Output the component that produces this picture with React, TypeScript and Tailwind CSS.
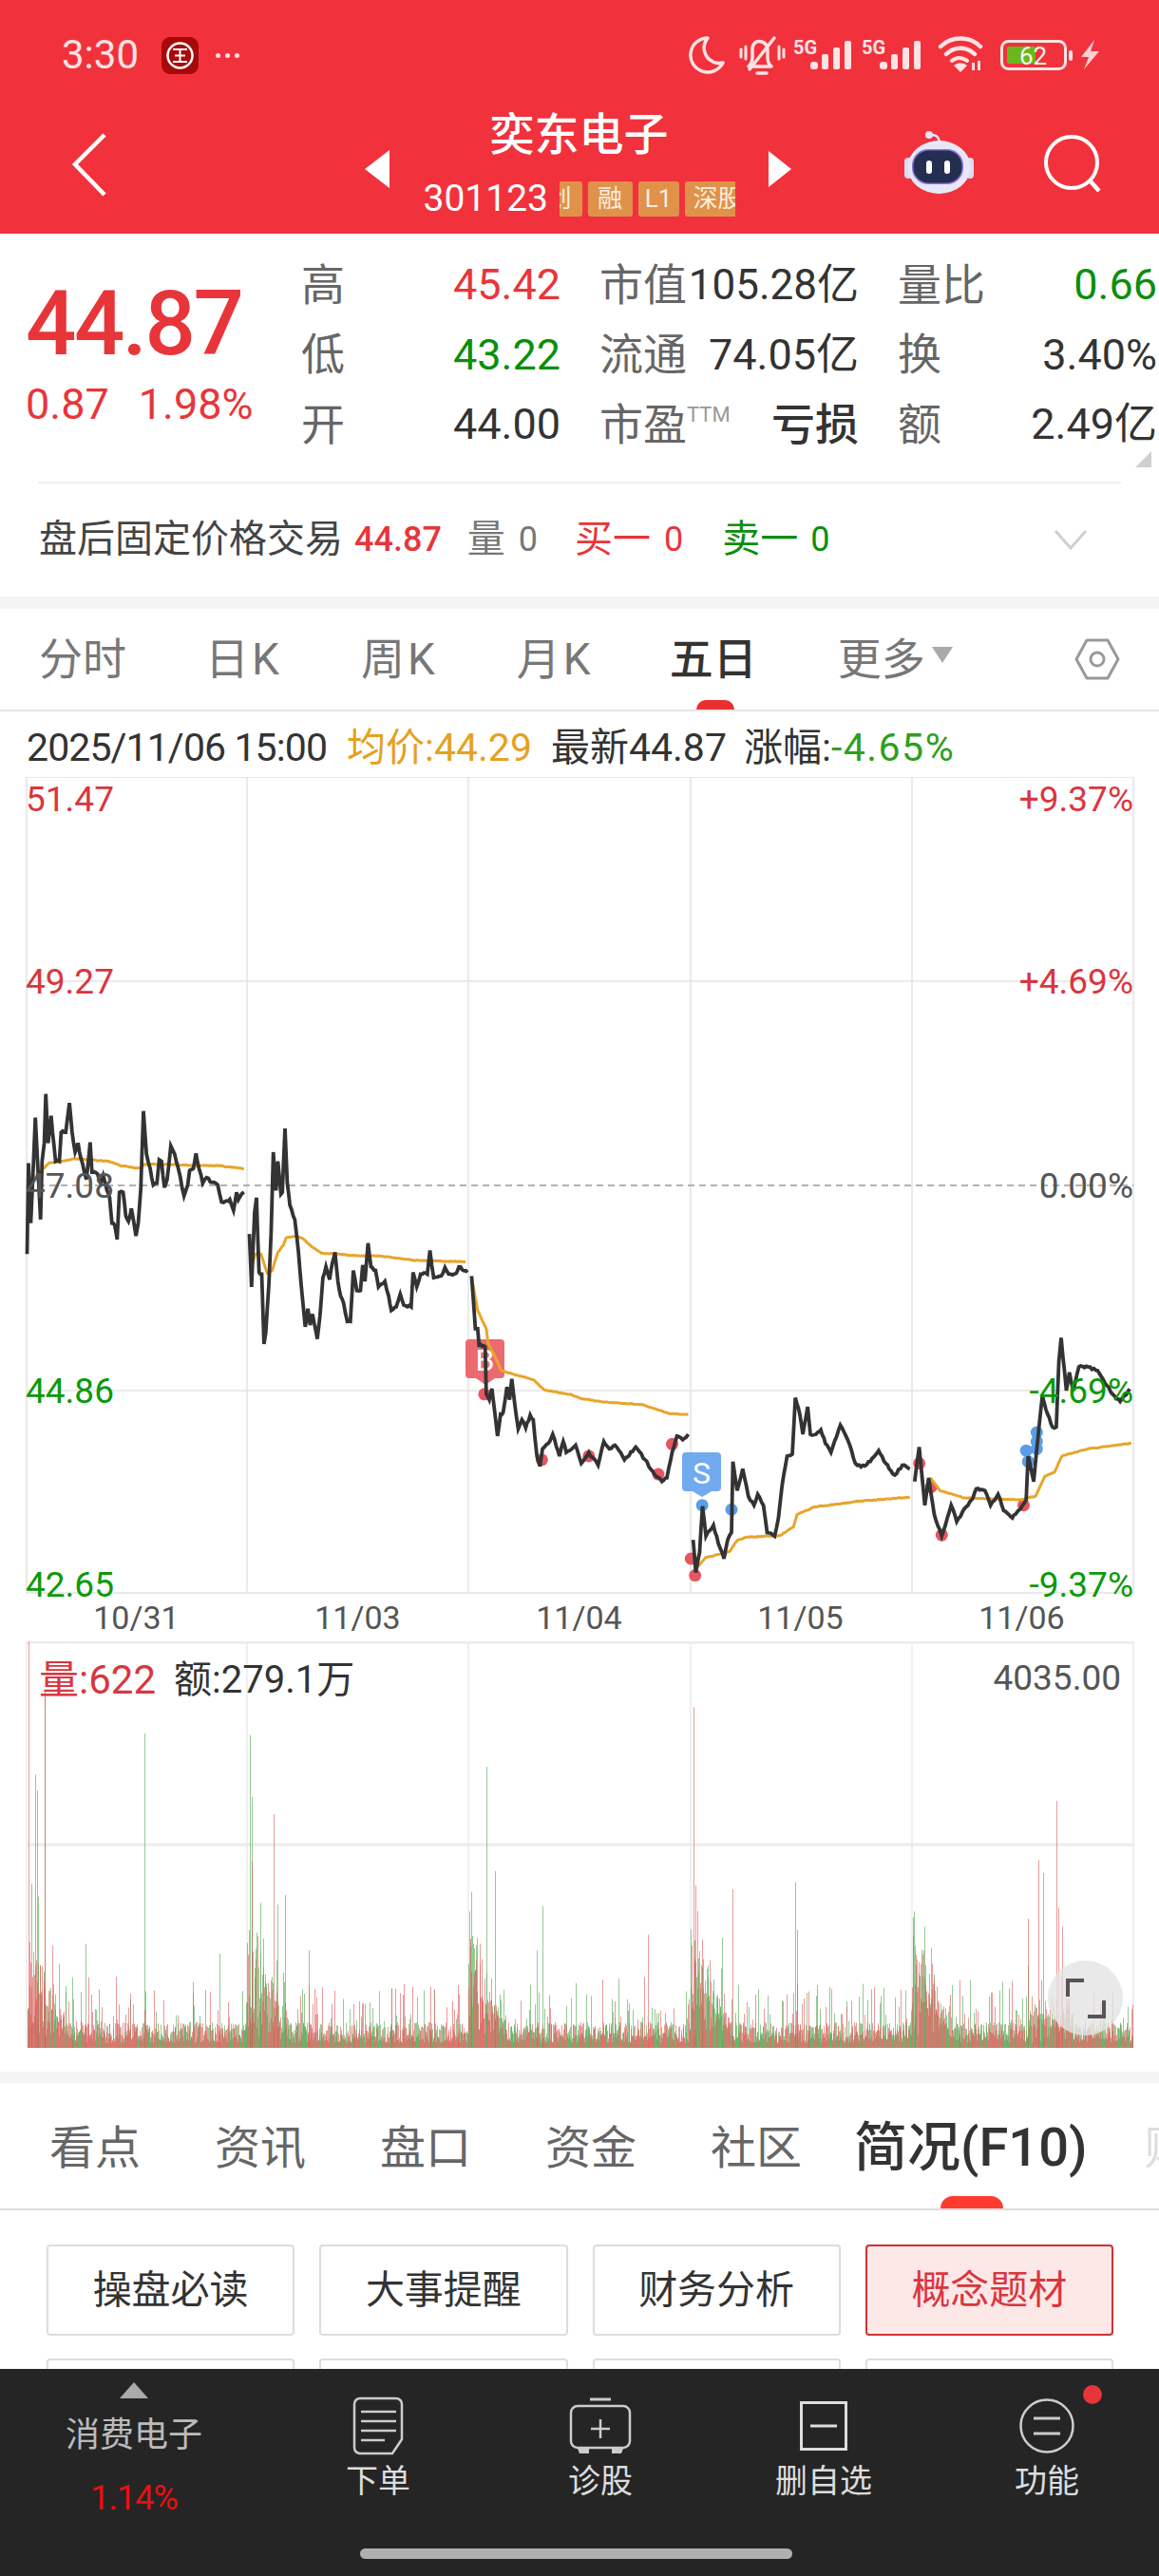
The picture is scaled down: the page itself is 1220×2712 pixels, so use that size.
import React from 'react'

type Pt = [number, number]

// seeded noise so the picture is the same on every load
function makeRand(seed: number) {
  let s = seed
  return () => {
    s = (s * 1664525 + 1013904223) % 4294967296
    return s / 4294967296
  }
}

const z3 = (p: Pt): Pt => [p[0] / 2.53, 1100 + p[1] / 2.61]
const z4 = (p: Pt): Pt => [600 + p[0] / 2.53, 1100 + p[1] / 2.61]

function jagged(points: Pt[], seed: number, amp = 1.1): string {
  const rand = makeRand(seed)
  const out: string[] = []
  for (let i = 0; i < points.length - 1; i++) {
    const [x0, y0] = points[i]
    const [x1, y1] = points[i + 1]
    const n = Math.max(1, Math.round((x1 - x0) / 1.8))
    for (let k = 0; k < n; k++) {
      const t = k / n
      const j = k === 0 ? 0 : (rand() - 0.5) * 2 * amp
      out.push(`${(x0 + (x1 - x0) * t).toFixed(1)},${(y0 + (y1 - y0) * t + j).toFixed(1)}`)
    }
  }
  const last = points[points.length - 1]
  out.push(`${last[0].toFixed(1)},${last[1].toFixed(1)}`)
  return out.join(' ')
}

const BLACK_1: Pt[] = ([[72,575],[76,325],[82,490],[88,350],[94,200],[100,320],[108,480],[112,320],[118,270],[122,135],[128,270],[136,195],[140,240],[148,320],[158,320],[163,240],[175,240],[185,160],[192,240],[200,295],[208,270],[215,310],[230,370],[240,268],[245,350],[260,355],[268,380],[275,360],[285,400],[292,420],[298,490],[305,495],[312,535],[318,405],[328,405],[335,470],[342,485],[350,450],[356,485],[362,525],[368,490],[375,395],[382,182],[390,300],[400,340],[408,385],[418,380],[424,316],[430,320],[438,392],[445,370],[455,278],[465,300],[475,340],[490,415],[500,385],[505,345],[515,340],[522,298],[530,340],[540,380],[550,365],[565,378],[580,385],[590,432],[600,430],[612,425],[622,455],[630,405],[635,425],[650,405]] as Pt[]).map(z3)
const BLACK_2: Pt[] = ([[664,520],[670,665],[678,460],[683,420],[690,625],[697,630],[703,822],[708,790],[716,660],[722,515],[728,295],[735,400],[740,320],[748,410],[752,405],[759,230],[765,380],[772,440],[785,480],[795,570],[803,670],[813,775],[820,725],[826,770],[832,740],[838,770],[845,808],[852,745],[860,640],[868,610],[878,645],[885,600],[892,570],[900,650],[907,690],[915,710],[925,760],[933,760],[941,620],[950,675],[960,675],[966,605],[972,650],[980,545],[988,610],[1000,620],[1008,665],[1025,650],[1035,690],[1042,730],[1055,720],[1066,685],[1075,715],[1095,720],[1100,625],[1110,665],[1120,630],[1138,630],[1145,565],[1155,640],[1175,635],[1185,612],[1195,630],[1215,628],[1222,610],[1245,625]] as Pt[]).map(z3)
const BLACK_3: Pt[] = [
  ...([[1256,635],[1266,780],[1272,780],[1276,825],[1292,830],[1295,960],[1303,975],[1310,945],[1325,1075],[1333,1015],[1340,1010],[1350,940],[1357,975],[1363,918],[1375,1020],[1380,1055],[1390,1030],[1400,1052],[1412,1018],[1420,1030],[1430,1130],[1438,1158],[1445,1110],[1460,1095],[1472,1070],[1490,1130],[1500,1090],[1508,1120]] as Pt[]).map(z3),
  ...([[15,1100],[30,1150],[50,1120],[75,1155],[90,1090],[105,1110],[120,1100],[145,1140],[175,1105],[200,1140],[225,1180],[245,1200],[258,1190],[272,1120],[285,1075],[300,1085],[315,1070]] as Pt[]).map(z4),
]
const BLACK_4: Pt[] = ([[328,1360],[335,1450],[345,1395],[353,1268],[362,1350],[372,1335],[382,1320],[395,1370],[410,1412],[420,1360],[430,1340],[434,1145],[445,1225],[460,1165],[475,1240],[490,1265],[500,1235],[515,1265],[525,1340],[545,1350],[555,1300],[565,1210],[578,1130],[592,1125],[600,970],[612,1015],[620,1070],[633,995],[640,1070],[655,1070],[668,1058],[680,1095],[695,1120],[720,1045],[745,1100],[760,1150],[775,1160],[800,1145],[822,1115],[850,1165],[865,1182],[885,1155],[905,1165]] as Pt[]).map(z4)
const BLACK_5: Pt[] = ([[918,1200],[930,1105],[945,1265],[955,1190],[970,1290],[990,1350],[1015,1265],[1030,1310],[1050,1275],[1070,1250],[1082,1220],[1105,1225],[1120,1265],[1140,1235],[1155,1280],[1178,1300],[1200,1275],[1215,1250],[1220,1130],[1235,1200],[1250,1040],[1258,965],[1272,1015],[1285,1050],[1295,1050],[1302,870],[1308,805],[1322,950],[1330,900],[1340,950],[1355,885],[1380,885],[1405,895],[1420,920],[1445,960],[1465,980],[1490,945]] as Pt[]).map(z4)

const AVG_LINES: Pt[][] = [
  ([[80,380],[115,340],[130,325],[165,320],[200,313],[240,316],[290,320],[320,332],[375,340],[385,328],[450,328],[520,332],[580,332],[650,340]] as Pt[]).map(z3),
  ([[664,530],[670,610],[680,575],[695,575],[712,628],[725,620],[740,570],[755,550],[762,530],[790,525],[810,535],[830,555],[855,572],[900,575],[960,580],[1010,580],[1100,592],[1240,596]] as Pt[]).map(z3),
  [
    ...([[1256,640],[1272,730],[1295,780],[1300,820],[1320,860],[1335,895],[1350,900],[1420,920],[1450,948],[1510,960]] as Pt[]).map(z3),
    ...([[0,960],[30,972],[90,982],[190,988],[260,1012],[315,1016]] as Pt[]).map(z4),
  ],
  ([[340,1435],[360,1410],[425,1392],[445,1362],[470,1353],[560,1348],[595,1325],[605,1290],[650,1270],[760,1255],[905,1243]] as Pt[]).map(z4),
  ([[960,1190],[985,1225],[1050,1245],[1200,1250],[1240,1240],[1265,1185],[1290,1175],[1310,1130],[1380,1110],[1495,1095]] as Pt[]).map(z4),
]

const RED_DOTS: Pt[] = [z3([1290, 960]), z3([1443, 1140]), z4([50, 1130]), z4([272, 1097]), z4([235, 1180]), z4([322, 1412]), z4([333, 1458]), z4([930, 1150]), z4([962, 1215]), z4([990, 1347]), z4([1208, 1265])]
const BLUE_DOTS: Pt[] = [z4([352, 1265]), z4([430, 1277]), z4([1215, 1115]), z4([1220, 1145]), z4([1243, 1065]), z4([1243, 1090]), z4([1243, 1110])]

// x, y in the zoomed crop of the volume panel, then colour
const VOL_SPIKES: [number, number, 'r' | 'g'][] = [
  [38,25,'r'],[47,445,'r'],[50,495,'g'],[61,180,'r'],[61,190,'g'],[52,830,'g'],[42,790,'g'],[116,980,'g'],[195,315,'g'],[98,1085,'g'],[338,320,'g'],[340,515,'g'],[340,720,'r'],[370,570,'r'],[385,825,'r'],[375,855,'g'],[352,850,'g'],[418,1000,'g'],[297,1010,'g'],[638,815,'g'],[658,420,'g'],[670,750,'g'],[734,860,'g'],[726,1000,'g'],[876,950,'r'],[938,232,'r'],[941,795,'r'],[950,965,'r'],[977,960,'g'],[991,808,'r'],[1075,785,'r'],[1078,935,'r'],[1093,1130,'r'],[1250,925,'g'],[1238,985,'g'],[1298,1095,'r'],[1390,900,'r'],[1404,715,'r'],[1411,755,'r'],[1429,528,'r'],[1432,865,'r'],[1436,925,'r'],[530,1120,'g'],[558,1115,'r'],[582,1115,'r'],[620,1110,'r'],[478,1170,'r'],[500,1165,'g'],
]

function buildVolume() {
  const rand = makeRand(77)
  let red = ''
  let green = ''
  const opens = [28, 260, 493, 727, 960]
  for (let x = 29; x < 1193; x += 1) {
    let open = 28
    for (const o of opens) if (o <= x) open = o
    const age = x - open
    const boost = age < 45 ? 110 * (1 - age / 45) : 0
    for (let layer = 0; layer < 2; layer++) {
      let h = 5 + rand() * 22 + boost * rand()
      if (rand() > 0.86) h += rand() * 50
      if (x > 1080 && x < 1130) h += rand() * 25
      const y = 2156 - h
      if (rand() > 0.5) red += `M${x}.5 2156V${y.toFixed(1)}`
      else green += `M${x}.5 2156V${y.toFixed(1)}`
    }
  }
  for (const [sx, sy, c] of VOL_SPIKES) {
    const x = Math.round(sx / 1.285)
    const d = `M${x}.5 2156V${(1720 + sy / 3).toFixed(1)}`
    if (c === 'r') red += d
    else green += d
  }
  return { red, green }
}

const VOL = buildVolume()

function StatusIcons() {
  return (
    <svg viewBox="725 30 435 56" className="w-[435px] h-[56px]">
      <g fill="none" stroke="#fde3e3" strokeLinecap="round" strokeLinejoin="round">
        <path d="M745 40 a18 18 0 1 0 16 26 a16 16 0 0 1 -16 -26z" strokeWidth="3.5" />
        <path d="M793 70 h19 q-4 -3 -4 -10 v-7 q0 -7 -6 -9 q-8 -2 -10 6 v10 q0 6 -4 10 h5 M797 77 h10" strokeWidth="3.5" />
        <path d="M789 73 L815 40" strokeWidth="3.5" />
        <path d="M780 52 v8 M785 49 v13 M820 49 v13 M825 52 v8" strokeWidth="3" />
      </g>
      <g fill="#fde3e3" fontFamily="Roboto, sans-serif" fontWeight="700" fontSize="20">
        <text x="835" y="57">5G</text>
        <text x="907" y="57">5G</text>
        <rect x="853" y="65" width="8" height="8" rx="3" />
        <rect x="865" y="57" width="7" height="16" rx="2" />
        <rect x="877" y="50" width="7" height="23" rx="2" />
        <rect x="889" y="43" width="7" height="30" rx="2" />
        <rect x="926" y="65" width="8" height="8" rx="3" />
        <rect x="938" y="57" width="7" height="16" rx="2" />
        <rect x="950" y="50" width="7" height="23" rx="2" />
        <rect x="962" y="43" width="7" height="30" rx="2" />
        <path d="M1011 76 l-7 -7 a10 10 0 0 1 14 0z" />
        <path d="M1023 66 h3 v8 h-3z M1029 64 h3 v10 h-3z" />
      </g>
      <g fill="none" stroke="#fde3e3" strokeWidth="4.5" strokeLinecap="round">
        <path d="M990 49 a30 30 0 0 1 42 0" />
        <path d="M996 57 a21 21 0 0 1 30 0" />
        <path d="M1002 64 a12 12 0 0 1 16 0" strokeWidth="4" />
      </g>
      <rect x="1054.5" y="43.5" width="67" height="29" rx="7" fill="none" stroke="#fde3e3" strokeWidth="3" />
      <rect x="1060" y="49" width="30" height="18" rx="2" fill="#6ab71c" />
      <rect x="1125" y="53" width="4" height="11" rx="2" fill="#fde3e3" />
      <text x="1073" y="68" fill="#f2f7ea" fontFamily="Roboto, sans-serif" fontSize="26">62</text>
      <path d="M1152 42 L1138 60 h8 l-5 13 L1157 54 h-9z" fill="#fbd0d0" />
    </svg>
  )
}

function Robot() {
  return (
    <svg viewBox="950 136 80 72" className="w-[80px] h-[72px]">
      <path d="M980 143 q9 -3 11 6" fill="none" stroke="#e6e3f6" strokeWidth="2.5" />
      <circle cx="980" cy="142" r="4" fill="#e6e3f6" />
      <rect x="954" y="166" width="8" height="22" rx="4" fill="#dcdcf2" />
      <rect x="1019" y="166" width="8" height="22" rx="4" fill="#dcdcf2" />
      <ellipse cx="990.5" cy="176" rx="33" ry="28" fill="#e8e7f7" />
      <rect x="962" y="157" width="54" height="37" rx="17" fill="#8a6fd8" />
      <rect x="963.5" y="158.5" width="51" height="34" rx="16" fill="#232f50" />
      <rect x="977" y="169" width="6" height="14" rx="3" fill="#fff" />
      <rect x="996" y="169" width="6" height="14" rx="3" fill="#fff" />
    </svg>
  )
}

function Header() {
  return (
    <div className="h-[246px] bg-[#f1323c] text-white">
      <div className="h-[116px] flex items-center pl-[65px] pr-[60px]">
        <span className="text-[42px] leading-none text-[#fde3e3] w-[105px]">3:30</span>
        <svg viewBox="0 0 39 39" className="w-[39px] h-[39px]">
          <rect width="39" height="39" rx="9" fill="#a60a0a" />
          <circle cx="19.5" cy="19.5" r="13" fill="none" stroke="#fff" strokeWidth="2.5" />
          <path d="M12 13 h15 M19.5 13 v13 M12 26 h15 M14 19.5 h11" stroke="#fff" strokeWidth="2" />
        </svg>
        <div className="flex gap-[5px] ml-[18px]">
          <span className="w-[5px] h-[5px] rounded-full bg-[#fde3e3]" />
          <span className="w-[5px] h-[5px] rounded-full bg-[#fde3e3]" />
          <span className="w-[5px] h-[5px] rounded-full bg-[#fde3e3]" />
        </div>
        <div className="ml-auto flex">
          <StatusIcons />
        </div>
      </div>
      <div className="h-[130px] flex items-start">
        <svg viewBox="0 0 40 70" className="w-[40px] h-[70px] ml-[75px] mt-[23px]">
          <path d="M35 3 L4 34 L35 66" fill="none" stroke="#fff" strokeWidth="4.5" />
        </svg>
        <svg viewBox="0 0 26 40" className="w-[26px] h-[40px] ml-[269px] mt-[42px]">
          <path d="M26 0 V40 L0 20z" fill="#fff" />
        </svg>
        <div className="w-[399px] flex flex-col items-center">
          <span className="text-[47px] leading-[56px] mt-[-2px] font-medium">奕东电子</span>
          <div className="flex items-center w-[328px] mt-[20px] h-[38px]">
            <span className="text-[39px] leading-none w-[143px] shrink-0">301123</span>
            <div className="flex gap-[6px] w-[185px] overflow-hidden">
              <span className="shrink-0 ml-[-24px] w-[48px] h-[37px] rounded-[3px] bg-[#e0924a] text-[#fdeedd] text-[26px] leading-[37px] text-center">创</span>
              <span className="shrink-0 w-[47px] h-[37px] rounded-[3px] bg-[#e0924a] text-[#fdeedd] text-[26px] leading-[37px] text-center">融</span>
              <span className="shrink-0 w-[43px] h-[37px] rounded-[3px] bg-[#e0924a] text-[#fdeedd] text-[26px] leading-[37px] text-center">L1</span>
              <span className="shrink-0 w-[75px] h-[37px] rounded-[3px] bg-[#e0924a] text-[#fdeedd] text-[26px] leading-[37px] pl-[9px]">深股</span>
            </div>
          </div>
        </div>
        <svg viewBox="0 0 24 38" className="w-[24px] h-[38px] mt-[43px]">
          <path d="M0 0 V38 L24 19z" fill="#fff" />
        </svg>
        <div className="ml-[115px] mt-[20px]">
          <Robot />
        </div>
        <svg viewBox="0 0 66 66" className="w-[66px] h-[66px] ml-[69px] mt-[25px]">
          <circle cx="31" cy="30" r="27" fill="none" stroke="#fff" strokeWidth="4" />
          <path d="M50 49 L60 60" stroke="#fff" strokeWidth="4.5" />
        </svg>
      </div>
    </div>
  )
}

function QuoteCell({ label, value, tone }: { label: string; value: string; tone: string }) {
  return (
    <div className="flex items-center justify-between">
      <span className="text-[46px] leading-none text-[#666]">{label}</span>
      <span className={`text-[45px] leading-none ${tone}`}>{value}</span>
    </div>
  )
}

function Quote() {
  return (
    <div className="relative h-[261px] flex">
      <div className="w-[317px] pl-[27px] pt-[45px] shrink-0 text-[#e8353a]">
        <div className="text-[94px] leading-[100px] font-medium tracking-[-2.5px]">44.87</div>
        <div className="text-[45px] leading-none mt-[12px] flex gap-[31px]">
          <span>0.87</span>
          <span>1.98%</span>
        </div>
      </div>
      <div className="grid grid-cols-[273px_273px_273px] gap-x-[41px] grid-rows-[73.5px_73.5px_73.5px] pt-[17px] items-center">
        <QuoteCell label="高" value="45.42" tone="text-[#e8353a]" />
        <div className="flex items-center justify-between">
          <span className="text-[46px] leading-none text-[#666]">市值</span>
          <span className="text-[44px] leading-none text-[#333]">105.28亿</span>
        </div>
        <QuoteCell label="量比" value="0.66" tone="text-[#0a8f0a]" />
        <QuoteCell label="低" value="43.22" tone="text-[#0a8f0a]" />
        <QuoteCell label="流通" value="74.05亿" tone="text-[#333]" />
        <QuoteCell label="换" value="3.40%" tone="text-[#333]" />
        <QuoteCell label="开" value="44.00" tone="text-[#333]" />
        <div className="flex items-center justify-between">
          <span className="flex items-start text-[46px] leading-none text-[#666]">
            市盈<span className="text-[22px] leading-[26px] text-[#999]">TTM</span>
          </span>
          <span className="text-[46px] leading-none font-medium text-[#333]">亏损</span>
        </div>
        <QuoteCell label="额" value="2.49亿" tone="text-[#333]" />
      </div>
      <svg viewBox="0 0 17 17" className="absolute left-[1195px] top-[229px] w-[17px] h-[17px]">
        <path d="M17 0 V17 H0z" fill="#d0d0d0" />
      </svg>
    </div>
  )
}

function AfterHours() {
  return (
    <div className="h-[121px] pl-[41px] relative text-[40px] leading-none">
      <div className="absolute left-[40px] right-[40px] top-0 h-[2px] bg-[#eee]" />
      <div className="h-full flex items-center">
        <span className="text-[#444]">盘后固定价格交易</span>
        <span className="ml-[12px] text-[36px] font-medium text-[#e8353a]">44.87</span>
        <span className="ml-[27px] text-[#777]">量</span>
        <span className="ml-[14px] text-[36px] text-[#777]">0</span>
        <span className="ml-[39px] text-[#e8353a]">买一</span>
        <span className="ml-[14px] text-[36px] text-[#e8353a]">0</span>
        <span className="ml-[41px] text-[#0a8f0a]">卖一</span>
        <span className="ml-[13px] text-[36px] text-[#0a8f0a]">0</span>
        <svg viewBox="0 0 36 22" className="w-[36px] h-[22px] ml-auto mr-[75px]">
          <path d="M2 2 L18 20 L34 2" fill="none" stroke="#d0d0d0" strokeWidth="3" />
        </svg>
      </div>
    </div>
  )
}

function ChartTabs() {
  return (
    <div className="relative h-[108px] flex items-center border-b-2 border-[#e6e6e6] text-[46px] leading-none text-[#777] pl-[41px]">
      <span>分时</span>
      <span className="ml-[83px] tracking-[3px]">日K</span>
      <span className="ml-[83px] tracking-[3px]">周K</span>
      <span className="ml-[83px] tracking-[3px]">月K</span>
      <span className="ml-[80px] text-[#333] font-medium">五日</span>
      <span className="ml-[85px]">更多</span>
      <svg viewBox="0 0 22 17" className="w-[22px] h-[17px] ml-[7px] mt-[-10px]">
        <path d="M0 0 H22 L11 17z" fill="#aaa" />
      </svg>
      <svg viewBox="0 0 48 44" className="w-[48px] h-[44px] ml-[128px]">
        <path d="M13 2 H35 L46 22 L35 42 H13 L2 22z" fill="none" stroke="#999" strokeWidth="3" strokeLinejoin="round" />
        <circle cx="24" cy="22" r="7" fill="none" stroke="#999" strokeWidth="3" />
      </svg>
      <span className="absolute left-[733px] bottom-0 w-[40px] h-[10px] rounded-t-full bg-[#e83030]" />
    </div>
  )
}

function InfoRow() {
  return (
    <div className="h-[69px] flex items-center pl-[28px] pt-[8px] text-[41px] leading-none text-[#333]">
      <span className="tracking-[-0.9px]">2025/11/06 15:00</span>
      <span className="ml-[21px] text-[#e5a11f]">均价:44.29</span>
      <span className="ml-[20px]">最新44.87</span>
      <span className="ml-[18px]">涨幅:</span>
      <span className="text-[#2f9e1f] tracking-[1.5px]">-4.65%</span>
    </div>
  )
}

function PriceChart() {
  return (
    <div className="relative h-[860px] text-[37px] leading-none">
      <svg viewBox="0 818 1220 860" className="block w-[1220px] h-[860px]">
        <g stroke="#e4e4e4" strokeWidth="1.5" fill="none">
          <path d="M28 818 H1193 M28 1033 H1193 M28 1464 H1193 M28 1677 H1193" />
          <path d="M28 818 V1678 M260 818 V1678 M493 818 V1678 M727 818 V1678 M960 818 V1678 M1193 818 V1678" />
        </g>
        <path d="M28 1248 H1193" stroke="#999" strokeWidth="1.5" strokeDasharray="7 5" />
        <path d="M490 1414 a4 4 0 0 1 4 -4 h33 a4 4 0 0 1 4 4 v33 a4 4 0 0 1 -4 4 h-6 l-10 7 l-10 -7 h-7 a4 4 0 0 1 -4 -4z" fill="#ea6a70" />
        <text x="510.5" y="1443" textAnchor="middle" fill="#fff" fontSize="32">B</text>
        <path d="M718 1533 a4 4 0 0 1 4 -4 h33 a4 4 0 0 1 4 4 v33 a4 4 0 0 1 -4 4 h-6 l-10 6 l-10 -6 h-7 a4 4 0 0 1 -4 -4z" fill="#72aaf0" />
        <text x="738.5" y="1562" textAnchor="middle" fill="#fff" fontSize="32">S</text>
        {RED_DOTS.map((p, i) => (
          <circle key={i} cx={p[0]} cy={p[1]} r="6.5" fill="#e85560" />
        ))}
        {BLUE_DOTS.map((p, i) => (
          <circle key={i} cx={p[0]} cy={p[1]} r="6.5" fill="#5a9ee8" />
        ))}
        {AVG_LINES.map((line, i) => (
          <polyline key={i} points={jagged(line, 10 + i, 0.4)} fill="none" stroke="#e8a52a" strokeWidth="3" strokeLinejoin="round" />
        ))}
        {[BLACK_1, BLACK_2, BLACK_3, BLACK_4, BLACK_5].map((line, i) => (
          <polyline key={i} points={jagged(line, 40 + i, 1.3)} fill="none" stroke="#333" strokeWidth="3.8" strokeLinejoin="miter" />
        ))}
      </svg>
      <span className="absolute left-[27px] top-[5px] text-[#d9363e]">51.47</span>
      <span className="absolute left-[27px] top-[197px] text-[#d9363e]">49.27</span>
      <span className="absolute left-[27px] top-[412px] text-[#555]">47.08</span>
      <span className="absolute left-[27px] top-[628px] text-[#0a9a0a]">44.86</span>
      <span className="absolute left-[27px] top-[832px] text-[#0a9a0a]">42.65</span>
      <span className="absolute right-[27px] top-[5px] text-[#d9363e]">+9.37%</span>
      <span className="absolute right-[27px] top-[197px] text-[#d9363e]">+4.69%</span>
      <span className="absolute right-[27px] top-[412px] text-[#555]">0.00%</span>
      <span className="absolute right-[27px] top-[628px] text-[#0a9a0a]">-4.69%</span>
      <span className="absolute right-[27px] top-[832px] text-[#0a9a0a]">-9.37%</span>
    </div>
  )
}

function DateAxis() {
  return (
    <div className="h-[50px] ml-[27px] w-[1165px] grid grid-cols-5 items-center text-center text-[34px] leading-none text-[#555]">
      <span>10/31</span>
      <span>11/03</span>
      <span>11/04</span>
      <span>11/05</span>
      <span>11/06</span>
    </div>
  )
}

function VolumeChart() {
  return (
    <div className="relative h-[428px]">
      <svg viewBox="0 1728 1220 428" className="block w-[1220px] h-[428px]">
        <g fill="none" stroke="#ececec" strokeWidth="1.5">
          <path d="M28 1729 H1193 M28 1942 H1193" strokeWidth="3" />
          <path d="M28 1728 V2156 M260 1728 V2156 M493 1728 V2156 M727 1728 V2156 M960 1728 V2156 M1193 1728 V2156" />
        </g>
        <path d={VOL.green} stroke="#4da64d" strokeWidth="1" opacity="0.6" fill="none" />
        <path d={VOL.red} stroke="#e04f4f" strokeWidth="1" opacity="0.58" fill="none" />
      </svg>
      <div className="absolute left-[41px] top-[20px] flex items-center leading-none">
        <span className="text-[42px] text-[#d9363e]">量:622</span>
        <span className="ml-[19px] text-[40px] text-[#333]">额:279.1万</span>
      </div>
      <span className="absolute right-[40px] top-[20px] text-[37px] leading-none text-[#555]">4035.00</span>
      <div className="absolute left-[1103px] top-[336px] w-[79px] h-[79px] rounded-full bg-[#e4e4e4]/80 flex items-center justify-center">
        <svg viewBox="0 0 42 42" className="w-[42px] h-[42px]">
          <path d="M19 2 H2 V19 M23 40 H40 V23" fill="none" stroke="#555" strokeWidth="4" />
        </svg>
      </div>
    </div>
  )
}

function DetailTabs() {
  return (
    <div className="relative h-[134px] flex items-center border-b-2 border-[#ddd] pl-[52px] pt-[5px] text-[48px] leading-none text-[#666] overflow-hidden">
      <span>看点</span>
      <span className="ml-[78px]">资讯</span>
      <span className="ml-[78px]">盘口</span>
      <span className="ml-[78px]">资金</span>
      <span className="ml-[78px]">社区</span>
      <span className="ml-[55px] text-[56px] text-[#333] font-medium mt-[-2px]">简况(F10)</span>
      <span className="ml-[60px] shrink-0 text-[#ddd]">财务</span>
      <span className="absolute left-[990px] bottom-0 w-[66px] h-[13px] rounded-t-full bg-[#ff3b30]" />
    </div>
  )
}

function DetailButtons() {
  const cell = 'h-[96px] flex items-center justify-center border-2 border-[#ddd] rounded-[4px] text-[41px] leading-none text-[#333]'
  return (
    <div className="grid grid-cols-4 gap-x-[26px] gap-y-[24px] pt-[36px] pl-[49px] pr-[48px]">
      <div className={cell}>操盘必读</div>
      <div className={cell}>大事提醒</div>
      <div className={cell}>财务分析</div>
      <div className="h-[96px] flex items-center justify-center border-2 border-[#cc3333] bg-[#fde8e8] rounded-[4px] text-[41px] leading-none text-[#d9363e]">概念题材</div>
      <div className={cell} />
      <div className={cell} />
      <div className={cell} />
      <div className={cell} />
    </div>
  )
}

function FooterItem({ label, width, children }: { label: string; width: string; children: React.ReactNode }) {
  return (
    <div className={`${width} flex flex-col items-center pt-[28px]`}>
      <div className="h-[64px] flex items-center">{children}</div>
      <span className="mt-[8px] text-[34px] leading-[36px] text-[#ddd]">{label}</span>
    </div>
  )
}

function Footer() {
  return (
    <div className="h-[218px] bg-[#252525] flex flex-col">
      <div className="flex h-[189px]">
        <div className="w-[282px] flex flex-col items-center pt-[14px]">
          <svg viewBox="0 0 30 17" className="w-[30px] h-[17px]">
            <path d="M15 0 L30 17 H0z" fill="#aaa" />
          </svg>
          <span className="mt-[21px] text-[36px] leading-none text-[#bbb]">消费电子</span>
          <span className="mt-[30px] text-[36px] leading-none tracking-[-1px] text-[#e81010]">1.14%</span>
        </div>
        <FooterItem label="下单" width="w-[232px]">
          <svg viewBox="0 0 54 62" className="w-[54px] h-[62px]">
            <path d="M8 2 H46 a6 6 0 0 1 6 6 V45 L42 60 H8 a6 6 0 0 1 -6 -6 V8 a6 6 0 0 1 6 -6z" fill="none" stroke="#ccc" strokeWidth="2.5" />
            <path d="M9 16 H46 M9 26 H46 M9 36 H46 M9 46 H34" stroke="#ccc" strokeWidth="2.5" />
          </svg>
        </FooterItem>
        <FooterItem label="诊股" width="w-[236px]">
          <svg viewBox="0 0 66 60" className="w-[66px] h-[60px]">
            <path d="M22 2 H44" stroke="#ccc" strokeWidth="3" />
            <rect x="2" y="9" width="62" height="44" rx="7" fill="none" stroke="#ccc" strokeWidth="2.5" />
            <path d="M33 23 V43 M23 33 H43" stroke="#ccc" strokeWidth="2.5" />
            <path d="M9 54 H21 V59 H11z M45 54 H57 L55 59 H45z" fill="#ccc" />
          </svg>
        </FooterItem>
        <FooterItem label="删自选" width="w-[234px]">
          <svg viewBox="0 0 50 52" className="w-[50px] h-[52px]">
            <rect x="1.5" y="1.5" width="47" height="49" fill="none" stroke="#ddd" strokeWidth="3" />
            <path d="M11 26 H39" stroke="#ddd" strokeWidth="3" />
          </svg>
        </FooterItem>
        <FooterItem label="功能" width="w-[236px]">
          <div className="relative">
            <svg viewBox="0 0 58 58" className="w-[58px] h-[58px]">
              <circle cx="29" cy="29" r="27.5" fill="none" stroke="#ccc" strokeWidth="2.5" />
              <path d="M15 21 H43 M15 37 H43" stroke="#ccc" strokeWidth="3" />
            </svg>
            <span className="absolute left-[67px] top-[-14px] w-[20px] h-[20px] rounded-full bg-[#e8353a]" />
          </div>
        </FooterItem>
      </div>
      <div className="ml-[379px] w-[455px] h-[11px] rounded-full bg-[#b0b0b0]" />
    </div>
  )
}

export default function App() {
  return (
    <div className="w-[1220px] h-[2712px] overflow-hidden bg-white whitespace-nowrap font-['Roboto','Noto_Sans_CJK_SC',sans-serif]">
      <div className="h-[2494px] overflow-hidden">
        <Header />
        <Quote />
        <AfterHours />
        <div className="h-[13px] bg-[#f4f4f4]" />
        <ChartTabs />
        <InfoRow />
        <PriceChart />
        <DateAxis />
        <VolumeChart />
        <div className="h-[25px]" />
        <div className="h-[12px] bg-[#f4f4f4]" />
        <DetailTabs />
        <DetailButtons />
      </div>
      <Footer />
    </div>
  )
}
